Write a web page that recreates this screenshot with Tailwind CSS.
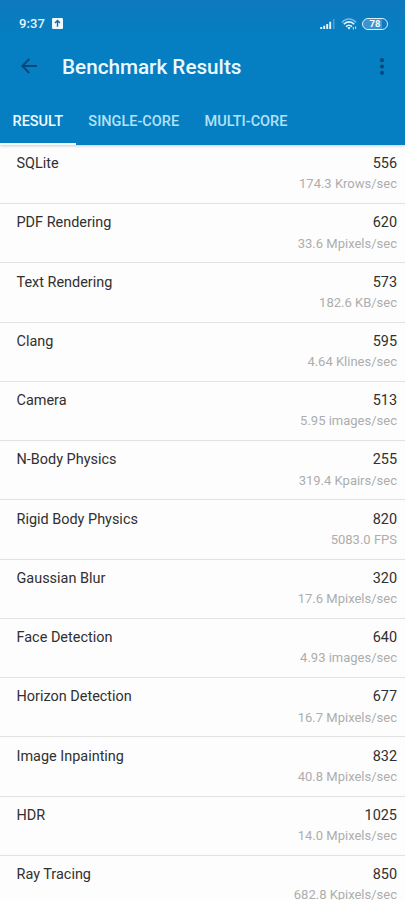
<!DOCTYPE html>
<html lang="en">
<head>
<meta charset="utf-8">
<title>Benchmark Results</title>
<script src="https://cdn.jsdelivr.net/npm/@tailwindcss/browser@4"></script>
</head>
<body class="h-[900px] w-[405px] overflow-hidden bg-[#fdfdfd] font-[Roboto,sans-serif]">
<div class="flex h-[900px] flex-col overflow-hidden">
  <header class="relative z-10 h-[144.8px] shrink-0 bg-[#057fc2] bg-linear-to-b from-[#0e79be] to-[#057fc2] to-[38px] shadow-[0_1px_3px_rgba(0,0,0,0.2)]">
    <div class="flex h-[38px] items-center pt-[9px] pr-[17px] pl-[19px]">
      <span class="text-[13px] leading-4 font-medium tracking-[0.1px] text-[#e4f6ff]">9:37</span>
      <svg class="ml-[7px] h-[11px] w-[11px]" viewBox="0 0 11 11"><rect width="11" height="11" rx="1.3" fill="#f0fbff"/><path d="M5.5 8.8V2.7M3 5.1l2.5-2.5L8 5.1" fill="none" stroke="#0d6da8" stroke-width="1.4"/></svg>
      <svg class="ml-auto h-[12px] w-[16px]" viewBox="0 0 16 12"><path d="M1.2 11V9M4.2 11V7.8M7.2 11V6M10.2 11V3.7" stroke="#e4f6ff" stroke-width="1.9"/><path d="M13.7 11V1" stroke="#559fd2" stroke-width="1.5"/></svg>
      <svg class="ml-[5px] h-[12px] w-[17px]" viewBox="0 0 17 12"><path d="M1 4.5C5-.1 11-.1 15 4.5" fill="none" stroke="#78b8e0" stroke-width="1.6"/><path d="M2.8 6.3c3-3.3 7.4-3.3 10.4 0M5 8.6c1.8-1.9 4.2-1.9 6 0" fill="none" stroke="#e4f6ff" stroke-width="1.6"/><path d="M6.3 9.7Q8 8.2 9.7 9.7L8 11.5z" fill="#e4f6ff"/><path d="M12.4 9v2.6M14.6 8.5v2.6" stroke="#a8d4ee" stroke-width="1.2"/></svg>
      <span class="ml-[4px] flex h-[12px] w-[26px] items-center justify-center rounded-full border-[1.3px] border-[#d9f0fc] bg-linear-to-r from-[#3f93cd] from-78% to-[#0e79be] to-78% text-[9.5px] leading-none font-bold text-[#f0fbff]">78</span>
    </div>
    <div class="flex h-[58px] items-center pr-[18px] pl-[20px]">
      <svg class="-mt-[2px] h-[18px] w-[18px]" viewBox="0 0 18 18"><path d="M17 9H2.5M9.3 2L2.3 9l7 7" fill="none" stroke="#05497a" stroke-width="1.9"/></svg>
      <h1 class="ml-[24px] text-[20.7px] leading-6 font-medium text-[#ecfaff]">Benchmark Results</h1>
      <svg class="ml-auto h-[18px] w-[10px]" viewBox="0 0 10 18"><g fill="#05497a"><circle cx="5" cy="2.2" r="2.1"/><circle cx="5" cy="8.5" r="2.1"/><circle cx="5" cy="14.8" r="2.1"/></g></svg>
    </div>
    <nav class="flex h-[48.5px] text-[14.5px] font-medium text-[#b3e2f8]">
      <div class="flex w-[75.5px] items-center justify-center border-b-[2.5px] border-[#f4fcff] pt-[5px] text-[#f0fbff]">RESULT</div>
      <div class="flex w-[116.5px] items-center justify-center border-b-[2.5px] border-transparent pt-[5px]">SINGLE-CORE</div>
      <div class="flex w-[108px] items-center justify-center border-b-[2.5px] border-transparent pt-[5px]">MULTI-CORE</div>
    </nav>
  </header>
  <main id="results"></main>
</div>
<script>
const results = [
  ["SQLite", "556", "174.3 Krows/sec"],
  ["PDF Rendering", "620", "33.6 Mpixels/sec"],
  ["Text Rendering", "573", "182.6 KB/sec"],
  ["Clang", "595", "4.64 Klines/sec"],
  ["Camera", "513", "5.95 images/sec"],
  ["N-Body Physics", "255", "319.4 Kpairs/sec"],
  ["Rigid Body Physics", "820", "5083.0 FPS"],
  ["Gaussian Blur", "320", "17.6 Mpixels/sec"],
  ["Face Detection", "640", "4.93 images/sec"],
  ["Horizon Detection", "677", "16.7 Mpixels/sec"],
  ["Image Inpainting", "832", "40.8 Mpixels/sec"],
  ["HDR", "1025", "14.0 Mpixels/sec"],
  ["Ray Tracing", "850", "682.8 Kpixels/sec"]
];
document.getElementById("results").innerHTML = results.map(([name, score, rate]) => `
  <section class="h-[59.25px] border-b border-[#e2e2e2] pt-[9.3px] pr-[8px] pl-[16.5px]">
    <div class="flex justify-between text-[14.45px] leading-[19px] text-[#303030]"><span>${name}</span><span>${score}</span></div>
    <div class="mt-[2.4px] text-right text-[13px] leading-[18px] text-[#adadad]">${rate}</div>
  </section>`).join("");
</script>
</body>
</html>
